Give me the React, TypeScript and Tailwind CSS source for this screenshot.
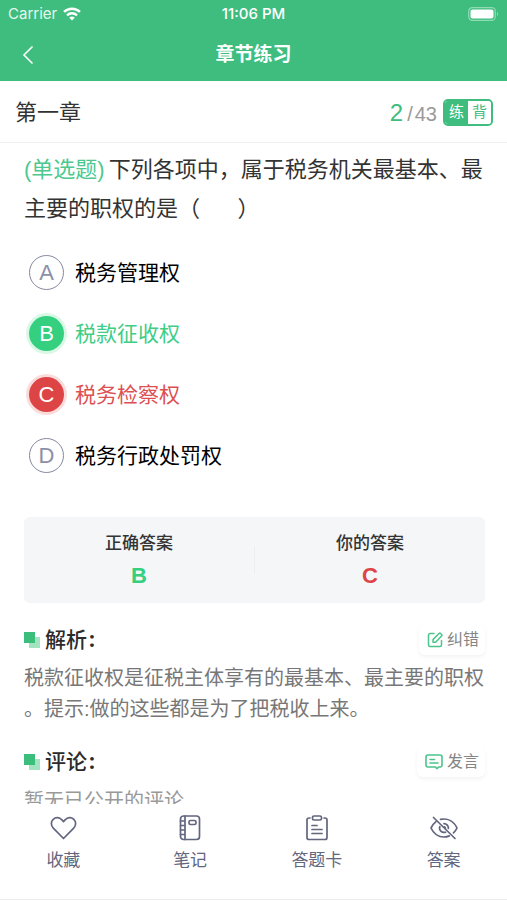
import { useState, type ReactNode } from "react";

type Status = "idle" | "correct" | "wrong";

const options: { key: string; text: string; status: Status }[] = [
  { key: "A", text: "税务管理权", status: "idle" },
  { key: "B", text: "税款征收权", status: "correct" },
  { key: "C", text: "税务检察权", status: "wrong" },
  { key: "D", text: "税务行政处罚权", status: "idle" },
];

const circleStyles: Record<Status, string> = {
  idle: "border border-[#85899f] text-[#8b8fa8]",
  correct: "bg-[#35d07f] text-white ring-3 ring-[#d9f8e6]",
  wrong: "bg-[#dd4446] text-white ring-3 ring-[#fadcdc]",
};

const labelStyles: Record<Status, string> = {
  idle: "text-black",
  correct: "text-[#40cd85]",
  wrong: "text-[#dc5052]",
};

function StatusBar() {
  return (
    <div className="grid h-7 grid-cols-3 items-center px-2 font-['Inter','Liberation_Sans',sans-serif] text-[15px] text-white">
      <div className="flex items-center gap-1.5 text-[#e6f8ee]">
        <span>Carrier</span>
        <svg width="18" height="14" viewBox="0 0 18 14" fill="none" stroke="white" strokeWidth="2.4" aria-hidden="true">
          <path d="M1 4.9a11.6 11.6 0 0 1 16 0" />
          <path d="M4 8.3a7.3 7.3 0 0 1 10 0" />
          <path d="M6.2 10.8a4.2 4.2 0 0 1 5.6 0L9 13.6Z" fill="white" stroke="none" />
        </svg>
      </div>
      <span className="text-center font-medium">11:06 PM</span>
      <svg className="justify-self-end" width="31" height="14" viewBox="0 0 31 14" fill="none" aria-hidden="true">
        <rect x="0.7" y="0.7" width="26.6" height="12.6" rx="3.6" stroke="#8fdcb3" strokeWidth="1.2" />
        <rect x="2.5" y="2.5" width="23" height="9" rx="2" fill="white" />
        <path d="M29 5v4c1.4-.4 1.4-3.6 0-4Z" fill="#8fdcb3" />
      </svg>
    </div>
  );
}

function SectionHeader({ title, action, icon }: { title: string; action: string; icon: ReactNode }) {
  return (
    <div className="flex h-8 items-center justify-between">
      <h2 className="flex items-center gap-1 text-[21px] font-medium text-[#2b2b2b]">
        <svg width="17" height="17" viewBox="0 0 17 17" aria-hidden="true">
          <rect x="5" y="5" width="11" height="11" fill="#a4e3c0" />
          <rect width="11" height="11" fill="#3bbd7c" />
        </svg>
        <span>
          {title}
          <span className="pl-0.5 font-['Noto_Sans',sans-serif] font-bold">:</span>
        </span>
      </h2>
      <button type="button" className="flex h-[30px] items-center gap-1 rounded-md bg-white pr-1.5 pl-2 text-base text-[#858585] shadow-[0_2px_4px_rgba(0,0,0,0.05)]">
        {icon}
        {action}
      </button>
    </div>
  );
}

const EditIcon = (
  <svg width="16" height="16" viewBox="0 0 16 16" fill="none" stroke="#4cc48a" strokeWidth="1.5" strokeLinejoin="round" strokeLinecap="round" aria-hidden="true">
    <path d="M7 1.5H3a1.500 1.500 0 0 0-1.500 1.500v10A1.500 1.500 0 0 0 3 14.500h10a1.500 1.500 0 0 0 1.500-1.500V8.500" />
    <path d="M6 10.300V7.600L12.300 1.300q.5-.5 1 0l1.500 1.500q.5.5 0 1L8.600 10.300Z" />
  </svg>
);

const CommentIcon = (
  <svg width="18" height="16" viewBox="0 0 18 16" fill="none" stroke="#4cc48a" strokeWidth="1.6" strokeLinejoin="round" strokeLinecap="round" aria-hidden="true">
    <path d="M3 1h12a2 2 0 0 1 2 2v8a2 2 0 0 1-2 2h-1.500l-1.500 1.700L10.500 13H3a2 2 0 0 1-2-2V3a2 2 0 0 1 2-2Z" />
    <path d="M5 5.500h4.500M5 9h8" />
  </svg>
);

const tabs: { label: string; icon: ReactNode }[] = [
  {
    label: "收藏",
    icon: <path d="M14.500 24.500 4.300 14.200C1.700 11.500 1.800 7.500 4.200 5.300c2.600-2.400 6.400-2 8.500.4l1.800 1.900 1.800-1.900c2.100-2.400 5.900-2.800 8.500-.4 2.400 2.200 2.500 6.200-.1 8.900Z" />,
  },
  {
    label: "笔记",
    icon: (
      <>
        <rect x="4.5" y="2" width="19" height="23.5" rx="3" />
        <path d="M9 2v23.500M4.500 7H9M4.500 11.500H9M4.500 16H9M4.500 20.500H9" />
        <rect x="13" y="6.5" width="7" height="4" rx="1.5" />
      </>
    ),
  },
  {
    label: "答题卡",
    icon: (
      <>
        <path d="M7 4H6a2 2 0 0 0-2 2v17.500a2 2 0 0 0 2 2h16a2 2 0 0 0 2-2V6a2 2 0 0 0-2-2h-1" />
        <rect x="9.5" y="2" width="9" height="4" rx="1.5" />
        <path d="M9 11.500h5M9 15.500h10M9 19.500h10" />
      </>
    ),
  },
  {
    label: "答案",
    icon: (
      <>
        <path d="M3.500 3.500 25 24.500" />
        <path d="M6 7.700C3.800 9.400 2.200 11.600 1 14c2.600 5.600 7.300 9 13 9 1.900 0 3.700-.4 5.300-1.100" />
        <path d="M10.500 5.400C18 3.700 24 7.500 27 14c-.9 1.900-2 3.500-3.500 4.900" />
        <path d="M9.800 12.500a4.500 4.500 0 0 0 5.700 5.700M14 9.600a4.500 4.500 0 0 1 4.400 4.900M14.200 12.800a1.500 1.500 0 0 1 1.200 1.300" />
      </>
    ),
  },
];

export default function App() {
  const [mode, setMode] = useState("练");

  return (
    <div className="flex h-screen flex-col bg-white font-['Liberation_Sans','Noto_Sans_CJK_SC',sans-serif]">
      <header className="bg-[#3ebd7e] text-white">
        <StatusBar />
        <div className="grid h-[53px] grid-cols-[40px_1fr_40px] items-center px-2">
          <button type="button" aria-label="返回" className="flex h-10 items-center pl-3">
            <svg width="16" height="20" viewBox="0 0 16 20" fill="none" stroke="white" strokeWidth="1.6" aria-hidden="true">
              <path d="M12.500 1.500 4 10l8.500 8.500" />
            </svg>
          </button>
          <h1 className="pt-0.5 text-center text-[19px] font-bold">章节练习</h1>
        </div>
      </header>

      <div className="flex h-[62px] shrink-0 items-center justify-between border-b border-[#eeeeee] pt-0.5 pr-3.5 pl-[15px]">
        <h2 className="text-[22px] text-[#333333]">第一章</h2>
        <div className="flex items-center gap-1.5">
          <p className="flex items-baseline gap-0.5 text-xl text-[#999999]">
            <span className="text-2xl text-[#3ebd7e]">2</span>
            <span className="pl-0.5">/</span>
            <span>43</span>
          </p>
          <div className="flex h-[27px] w-[50px] overflow-hidden rounded-[5px] border-2 border-[#3ebd7e]">
            {["练", "背"].map((item) => (
              <button
                key={item}
                type="button"
                aria-pressed={mode === item}
                onClick={() => setMode(item)}
                className={`flex flex-1 items-center justify-center text-[15px] ${mode === item ? "bg-[#3ebd7e] text-white" : "bg-white text-[#3ebd7e]"}`}
              >
                {item}
              </button>
            ))}
          </div>
        </div>
      </div>

      <main className="min-h-0 flex-1 overflow-hidden pt-[7px] pr-[22px] pl-6">
        <p className="text-[22px] leading-[39px] text-[#333333]">
          <span className="pr-1 text-[#4cc990]">(单选题)</span>
          下列各项中，属于税务机关最基本、最主要的职权的是（&emsp;&ensp;&thinsp;）
        </p>

        <fieldset aria-label="选项" className="mt-3.5">
          {options.map((option) => (
            <label key={option.key} className="flex h-[61px] items-center gap-[11px] pl-[5px]">
              <input type="radio" name="answer" defaultChecked={option.status === "wrong"} className="sr-only" />
              <span className={`flex size-[35px] shrink-0 items-center justify-center rounded-full text-[22px] ${circleStyles[option.status]}`}>
                {option.key}
              </span>
              <span className={`text-[21px] ${labelStyles[option.status]}`}>{option.text}</span>
            </label>
          ))}
        </fieldset>

        <dl className="mt-[31px] flex h-[86px] items-center rounded-md bg-[#f4f6f8] text-center">
          <div className="flex-1">
            <dt className="text-[17px] leading-8 font-medium text-[#333333]">正确答案</dt>
            <dd className="text-[22px] leading-8 font-bold text-[#35d07f]">B</dd>
          </div>
          <div className="h-7 w-px bg-[#eceef1]" aria-hidden="true" />
          <div className="flex-1">
            <dt className="text-[17px] leading-8 font-medium text-[#333333]">你的答案</dt>
            <dd className="text-[22px] leading-8 font-bold text-[#dd4446]">C</dd>
          </div>
        </dl>

        <section className="mt-[21px]">
          <SectionHeader title="解析" action="纠错" icon={EditIcon} />
          <p className="mt-[7px] text-xl leading-[31px] text-[#777777] [line-break:anywhere]">
            税款征收权是征税主体享有的最基本、最主要的职权。提示:做的这些都是为了把税收上来。
          </p>
        </section>

        <section className="mt-[21px]">
          <SectionHeader title="评论" action="发言" icon={CommentIcon} />
          <p className="mt-2 text-xl leading-[31px] text-[#999999]">暂无已公开的评论</p>
        </section>
      </main>

      <nav className="grid h-24 shrink-0 grid-cols-4 border-b border-[#eeeeee] bg-white">
        {tabs.map((tab) => (
          <button key={tab.label} type="button" className="flex flex-col items-center gap-1 pt-2.5 text-[17px] leading-[30px] text-[#62667e]">
            <svg width="28" height="28" viewBox="0 0 28 28" fill="none" stroke="currentColor" strokeWidth="1.7" strokeLinecap="round" strokeLinejoin="round" aria-hidden="true">
              {tab.icon}
            </svg>
            {tab.label}
          </button>
        ))}
      </nav>
    </div>
  );
}
